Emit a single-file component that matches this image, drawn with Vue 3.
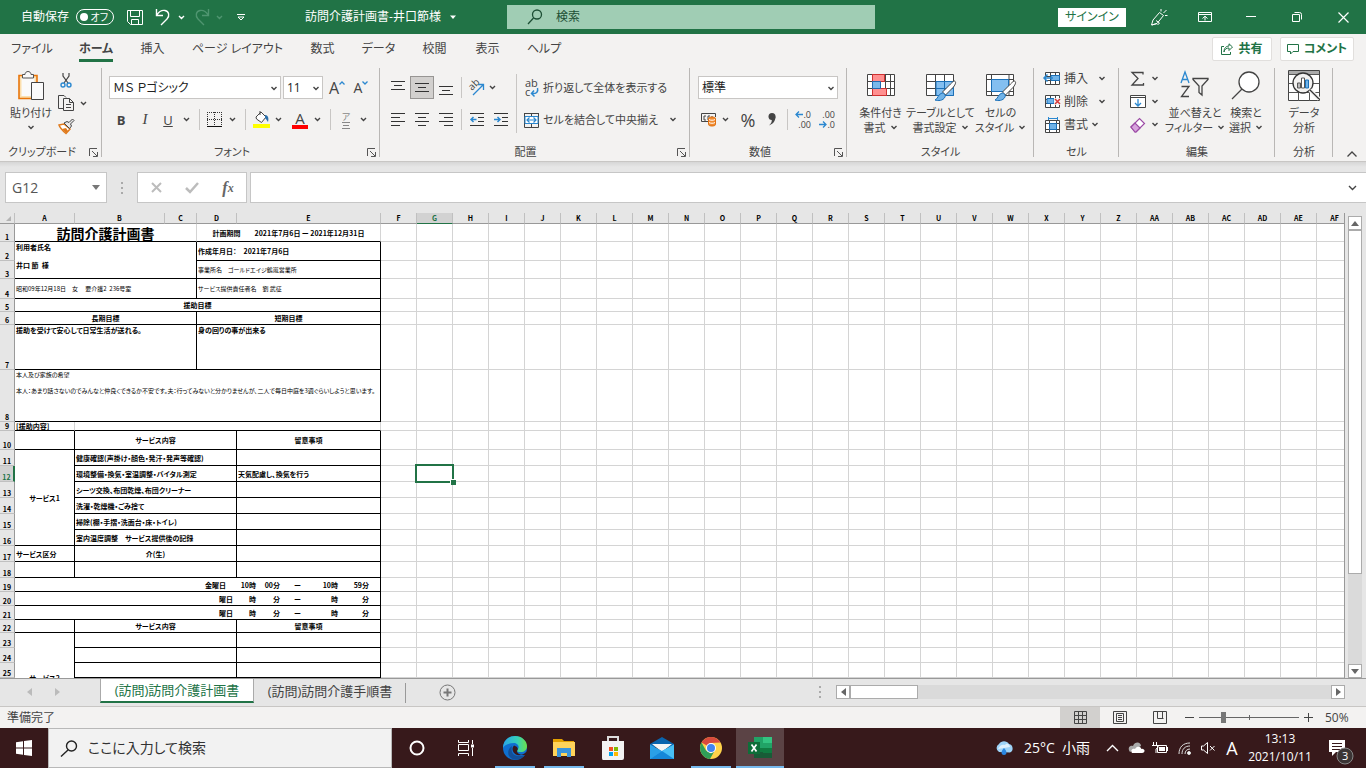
<script setup>
import { ref } from 'vue'

const tabs = ['ファイル', 'ホーム', '挿入', 'ページ レイアウト', '数式', 'データ', '校閲', '表示', 'ヘルプ']
const autosave = ref(false)
const zoom = ref(23)

const lead = [
  { n: 'A', w: 60 }, { n: 'B', w: 90 }, { n: 'C', w: 32 }, { n: 'D', w: 40 }, { n: 'E', w: 144 }
]
const rest = []
for (let i = 5; i < 32; i++) {
  rest.push({ n: i < 26 ? String.fromCharCode(65 + i) : 'A' + String.fromCharCode(39 + i), w: 36 })
}
const columns = [...lead, ...rest]

const service = (t, note = '') => [{ t, s: 3 }, { t: note }]
const time = (...parts) => [{ s: 5, parts, c: 'mid' }]
const rows = [
  { h: 18, cells: [{ t: '訪問介護計画書', s: 3, c: 'title open' }, { t: '計画期間　　2021年7月6日 ー 2021年12月31日', s: 2, c: 'center open' }] },
  { h: 19, cells: [{ t: '利用者氏名\n\n井口 節  様', s: 3, r: 2, c: 'top client' }, { t: '作成年月日：　2021年7月6日', s: 2 }] },
  { h: 18, cells: [{ t: '事業所名　ゴールドエイジ鶴嵐営業所', s: 2, c: 'thin' }] },
  { h: 20, cells: [{ t: '昭和09年12月18日　女　 要介護2  236号室', s: 3, c: 'thin' }, { t: 'サービス提供責任者名　劉 武征', s: 2, c: 'thin' }] },
  { h: 13, cells: [{ t: '援助目標', s: 5, c: 'center' }] },
  { h: 13, cells: [{ t: '長期目標', s: 3, c: 'center' }, { t: '短期目標', s: 2, c: 'center' }] },
  { h: 45, cells: [{ t: '援助を受けて安心して日常生活が送れる。', s: 3, c: 'top' }, { t: '身の回りの事が出来る', s: 2, c: 'top' }] },
  { h: 52, cells: [{ t: '本人及び家族の希望\n\n本人：あまり話さないのでみんなと仲良くできるか不安です。夫：行ってみないと分かりませんが、二人で毎日中庭を3週ぐらいしようと思います。', s: 5, c: 'top thin' }] },
  { h: 9, cells: [{ t: '[援助内容]', c: 'open' }, { s: 4, c: 'open' }] },
  { h: 19, cells: [{}, { t: 'サービス内容', s: 3, c: 'center' }, { t: '留意事項', c: 'center' }] },
  { h: 16, cells: [{ t: 'サービス1', r: 6, c: 'center' }, ...service('健康確認(声掛け・顔色・発汗・発声等確認)')] },
  { h: 16, cells: service('環境整備・換気・室温調整・バイタル測定', '天気配慮し、換気を行う') },
  { h: 16, cells: service('シーツ交換、布団乾燥、布団クリーナー') },
  { h: 16, cells: service('洗濯・乾燥機・ごみ捨て') },
  { h: 16, cells: service('掃除(棚・手摺・洗面台・床・トイレ)') },
  { h: 16, cells: service('室内温度調整　サービス提供後の記録') },
  { h: 16, cells: [{ t: 'サービス区分' }, { t: '介(生)', s: 3, c: 'center' }, {}] },
  { h: 16, cells: [{}, ...service('')] },
  { h: 14, cells: time('金曜日　', '10時', '00分', 'ー', '10時', '59分') },
  { h: 14, cells: time('曜日', '時', '分', 'ー', '時', '分') },
  { h: 14, cells: time('曜日', '時', '分', 'ー', '時', '分') },
  { h: 13, cells: [{}, { t: 'サービス内容', s: 3, c: 'center' }, { t: '留意事項', c: 'center' }] },
  { h: 15, cells: [{ t: 'サービス2', r: 4, c: 'center low' }, ...service('')] },
  { h: 15, cells: service('') },
  { h: 15, cells: service('') },
  { h: 15, cells: service('') }
]
</script>

<template>
  <div class="screen">
    <header class="titlebar">
      <div class="quick">
        <label class="auto">自動保存
          <span class="switch"><input v-model="autosave" type="checkbox"><i></i><b>オフ</b></span>
        </label>
        <button class="plain save" aria-label="保存">
          <svg width="16" height="17" fill="none" stroke="#fff"><path d="M.5 1.5h15v14h-12l-3-3zM3.500 1.500v6h9v-6M4.500 15.500v-5h7v5" /></svg>
        </button>
        <button class="plain undo" aria-label="元に戻す">
          <svg width="30" height="18" fill="none" stroke="#fff" stroke-width="1.400"><path d="M1.500 1v6.500H8M1.800 7C4 3.500 7 2 10 2.500c4 .8 5 5.500 2 8.500l-6 6M24 8l2.500 2.500L29 8" /></svg>
        </button>
        <button class="plain redo" aria-label="やり直し">
          <svg width="30" height="18" fill="none" stroke="#4f9570" stroke-width="1.400"><path d="M13.500 1v6.500H7M13.200 7C11 3.500 8 2 5 2.500 1 3.300 0 8 3 11l6 6M22 8l2.500 2.500L27 8" /></svg>
        </button>
        <button class="plain custom" aria-label="クイック アクセス">
          <svg width="8" height="8" fill="none" stroke="#fff"><path d="M0 1.500h8M1 4l3 3 3-3z" /></svg>
        </button>
        <button class="plain doc">訪問介護計画書-井口節様
          <svg width="6" height="4" fill="#fff"><path d="M0 .5h6L3 4z" /></svg>
        </button>
      </div>
      <label class="find">
        <svg width="16" height="16" fill="none" stroke="#1d4f35" stroke-width="1.300"><circle cx="10" cy="5.500" r="4.500" /><path d="M6.500 9 1 15" /></svg>
        <input type="text" placeholder="検索" aria-label="検索">
      </label>
      <div class="window">
        <button class="signin">サインイン</button>
        <button class="plain" aria-label="描画"><svg width="18" height="18" fill="none" stroke="#fff"><path d="M9.500 4.500 13.500 7.500 7 15.500 1.500 17 3 12zM2 17l5-1.500M6 12.500l3.500 2.500L7.500 17M11 3.500V1M13.500 5l3-3M15 7.500h2.500" /></svg></button>
        <button class="plain" aria-label="リボンの表示オプション"><svg width="14" height="12" fill="none" stroke="#fff"><path d="M.5 1.500h13v9H.5zM.5 3.500h13M7 9.500V5.500M4.500 7.500 7 5.200l2.500 2.300" /></svg></button>
        <button class="plain" aria-label="最小化"><svg width="10" height="10" stroke="#fff"><path d="M0 4.500h10" /></svg></button>
        <button class="plain" aria-label="元のサイズ"><svg width="11" height="11" fill="none" stroke="#fff"><path d="M.5 2.500h7v7h-7zM2.500.5h5a2 2 0 0 1 2 2v5" /></svg></button>
        <button class="plain" aria-label="閉じる"><svg width="11" height="11" stroke="#fff" stroke-width="1.200"><path d="m.5.5 10 10M10.500.5l-10 10" /></svg></button>
      </div>
    </header>

    <div class="tabrow">
      <nav>
        <button v-for="(t, i) in tabs" :key="t" class="plain" :class="{ on: i === 1 }">{{ t }}</button>
      </nav>
      <div class="share">
        <button><svg width="12" height="12" fill="none" stroke="#217346"><path d="M3 3.500H.5v8h9V9M3 9c.5-3 2.500-4 5-4V7.500l3.500-3.500L8 .8V3C5 3.200 3 5 3 9z" /></svg>共有</button>
        <button><svg width="12" height="11" fill="none" stroke="#217346"><path d="M.5.5h11v7H6l-2.500 2.500V7.500h-3z" /></svg>コメント</button>
      </div>
    </div>

    <section class="ribbon">
      <div class="group g-clip">
        <div class="body clip">
          <button class="plain big">
            <svg width="30" height="32" fill="none"><path d="M3 5.500h18v23H3z" fill="#fbdfae" stroke="#e8750a" stroke-width="1.600" /><path d="M5.500 8h13v18h-13z" fill="#fafafa" /><path d="M6.500 8V4.500H9C9 .5 15 .5 15 4.500h2.500V8z" fill="#fafafa" stroke="#555" /><path d="M15.500 12.500h12v17h-12z" fill="#fafafa" stroke="#444" /></svg>
            <span>貼り付け</span><svg class="chev" width="8" height="5"><path d="m1.500 1 2.500 2.500L6.500 1" /></svg>
          </button>
          <div class="minis">
            <button class="plain" aria-label="切り取り"><svg width="16" height="16" fill="none"><path d="M5 1v3l5 7M11 1v3L6 11" stroke="#444" stroke-width="1.200" /><g stroke="#2b88d0" stroke-width="1.400"><circle cx="5" cy="13" r="2" /><circle cx="11" cy="13" r="2" /></g></svg></button>
            <button class="plain" aria-label="コピー"><svg width="30" height="16" fill="none" stroke="#444"><path d="M6 13.500H.5v-13H6l2 2M5.500 3.500h6l4 4v8h-10zM11.500 3.500v4h4M8 9.500h5M8 12.500h5" /><path d="m23 7 2.500 2.500L28 7" stroke-width="1.400" /></svg></button>
            <button class="plain" aria-label="書式のコピー"><svg width="17" height="16" fill="none"><path d="m1 7 5-1 6 5-4 4.500C5 13 2 10 1 7z" fill="#fff" stroke="#e07a1c" stroke-width="1.500" /><path d="m4 11 4-1 2 3-2 2z" fill="#e07a1c" /><path d="m6 5 3-1.500 2 1L14.500 1 16 2.500 12.500 6l1 2-2 2.500z" fill="#e8e8e8" stroke="#444" /></svg></button>
          </div>
        </div>
        <div class="foot"><span>クリップボード</span><svg width="9" height="9"><path d="M.5 8V.5H8M3 3l5 5M8.500 4v4.500H4" /></svg></div>
      </div>

      <div class="group g-font">
        <div class="body stack">
          <div class="line">
            <span class="pick name"><select aria-label="フォント"><option>ＭＳ Ｐゴシック</option></select><svg class="chev" width="8" height="5"><path d="m1.500 1 2.500 2.500L6.500 1" /></svg></span>
            <span class="pick size"><select aria-label="フォント サイズ"><option>11</option></select><svg class="chev" width="8" height="5"><path d="m1.500 1 2.500 2.500L6.500 1" /></svg></span>
            <button class="plain cell grow">A<svg width="6" height="4" fill="none" stroke="#2b88d0" stroke-width="1.300"><path d="m.5 3.500 2.500-2.500 2.500 2.500" /></svg></button>
            <button class="plain cell grow small">A<svg width="6" height="4" fill="none" stroke="#2b88d0" stroke-width="1.300"><path d="m.5.5 2.500 2.500 2.500-2.500" /></svg></button>
          </div>
          <div class="line">
            <button class="plain cell bold">B</button><button class="plain cell ital">I</button><button class="plain cell under"><u>U</u></button>
            <svg class="chev arrow" width="15" height="5"><path d="m5 1 2.500 2.500L10 1" /></svg><hr>
            <button class="plain icon" aria-label="罫線"><svg width="16" height="17" stroke="#333"><path d="M0 1.500h15M0 8.500h15M.5 1v13M7.500 1v13M14.500 1v13" stroke-dasharray="1 1" /><path d="M0 15.500h15" stroke="#111" /></svg></button>
            <svg class="chev arrow" width="15" height="5"><path d="m5 1 2.500 2.500L10 1" /></svg><hr>
            <button class="plain icon" aria-label="塗りつぶし"><svg width="17" height="17" fill="none"><path d="m3 6 5-5 5 5-4.500 5.500-5-3.500zM7 0v4" fill="#fff" stroke="#444" /><path d="M12 4c3 0 4 3 3 7-1-1-1.500-3-3-4z" fill="#2b6faa" /><path d="M0 13h17v4H0z" fill="#ff0" /></svg></button>
            <svg class="chev arrow" width="15" height="5"><path d="m5 1 2.500 2.500L10 1" /></svg>
            <button class="plain icon color">A</button>
            <svg class="chev arrow" width="15" height="5"><path d="m5 1 2.500 2.500L10 1" /></svg><hr>
            <button class="plain icon ruby">ア<svg width="8" height="7" stroke="#888"><path d="M0 .5h8M1 3.500h6M0 6.500h8" /></svg></button>
            <svg class="chev arrow" width="15" height="5"><path d="m5 1 2.500 2.500L10 1" /></svg>
          </div>
        </div>
        <div class="foot"><span>フォント</span><svg width="9" height="9"><path d="M.5 8V.5H8M3 3l5 5M8.500 4v4.500H4" /></svg></div>
      </div>

      <div class="group g-align">
        <div class="body aligns">
          <div class="stack">
            <div class="line">
              <button class="plain cell" aria-label="上揃え"><svg width="14" height="16"><path class="ink" d="M0 1.500h14M3 5.500h8M0 9.500h14" /></svg></button>
              <button class="plain cell pressed" aria-label="上下中央"><svg width="14" height="16"><path class="ink" d="M0 3.500h14M3 7.500h8M0 11.500h14" /></svg></button>
              <button class="plain cell" aria-label="下揃え"><svg width="14" height="16"><path class="ink" d="M0 6.500h14M3 10.500h8M0 14.500h14" /></svg></button><hr>
              <button class="plain icon" aria-label="方向"><svg width="18" height="18" fill="none"><text font-size="10" fill="#444" transform="translate(6 12) rotate(-45)">ab</text><path d="m7 16 10-10M12 5.500h5.500V11" stroke="#2b88d0" stroke-width="1.300" /></svg></button>
              <svg class="chev arrow" width="15" height="5"><path d="m5 1 2.500 2.500L10 1" /></svg>
            </div>
            <div class="line">
              <button class="plain cell" aria-label="左揃え"><svg width="14" height="14"><path class="ink" d="M0 .5h14M0 4.500h9M0 8.500h14M0 12.500h9" /></svg></button>
              <button class="plain cell" aria-label="中央揃え"><svg width="14" height="14"><path class="ink" d="M0 .5h14M3 4.500h8M0 8.500h14M3 12.500h8" /></svg></button>
              <button class="plain cell" aria-label="右揃え"><svg width="14" height="14"><path class="ink" d="M0 .5h14M5 4.500h9M0 8.500h14M5 12.500h9" /></svg></button><hr>
              <button class="plain cell" aria-label="インデントを減らす"><svg width="14" height="14" fill="none"><path class="ink" d="M0 .5h14M8 4.500h6M8 8.500h6M0 12.500h14" /><path d="M6.500 6.500H1M3.500 4 1 6.500 3.500 9" stroke="#2b88d0" stroke-width="1.500" /></svg></button>
              <button class="plain cell" aria-label="インデントを増やす"><svg width="14" height="14" fill="none"><path class="ink" d="M0 .5h14M8 4.500h6M8 8.500h6M0 12.500h14" /><path d="M0 6.500h6M3.500 4 6 6.500 3.500 9" stroke="#2b88d0" stroke-width="1.500" /></svg></button>
            </div>
          </div>
          <hr class="tall">
          <div class="stack wraps">
            <button class="plain line"><svg width="16" height="20" fill="none"><text x="1" y="9" font-size="11" fill="#444">ab</text><text x="1" y="18" font-size="11" fill="#444">c</text><path d="M13.500 10c1 4-1 6-6 5.500M10 12.500 7.500 15.500l3 3" stroke="#2b88d0" stroke-width="1.500" /></svg>折り返して全体を表示する</button>
            <button class="plain line"><svg width="16" height="16" fill="none"><path d="M.5 1v14.500h14V1M0 1.500h15M7.500 1v3M7.500 12v3" stroke="#444" /><path d="M1 4.500h13v7H1z" fill="#fff" stroke="#2b88d0" /><path d="M3 8h9M5.500 5.500 3 8l2.500 2.500M9.500 5.500 12 8l-2.500 2.500" stroke="#2b88d0" stroke-width="1.200" /></svg>セルを結合して中央揃え<svg class="chev push" width="8" height="5"><path d="m1.500 1 2.500 2.500L6.500 1" /></svg></button>
          </div>
        </div>
        <div class="foot"><span>配置</span><svg width="9" height="9"><path d="M.5 8V.5H8M3 3l5 5M8.500 4v4.500H4" /></svg></div>
      </div>

      <div class="group g-num">
        <div class="body stack">
          <div class="line"><span class="pick format"><select aria-label="表示形式"><option>標準</option></select><svg class="chev" width="8" height="5"><path d="m1.500 1 2.500 2.500L6.500 1" /></svg></span></div>
          <div class="line">
            <button class="plain icon" aria-label="通貨"><svg width="17" height="15" fill="none"><path d="M8 9.500H1.500v-8h14V5M6 4H4v4h2M8 8V4h2M12 4v2" stroke="#444" /><path d="M8.500 6.500v6c0 2 7 2 7 0v-6c0-2-7-2-7 0z" fill="#f08a2e" stroke="#e07010" /><path d="M9 7.500c1 1 5 1 6 0M9 10.500c1 1 5 1 6 0" stroke="#fff" /></svg></button>
            <svg class="chev arrow" width="15" height="5"><path d="m5 1 2.500 2.500L10 1" /></svg>
            <button class="plain cell pct">%</button>
            <button class="plain cell" aria-label="桁区切り"><svg width="8" height="13"><circle cx="4" cy="3.500" r="3.500" fill="#444" /><path d="M7.500 3.500C7.500 8 5 11 1 12.500c2-2 3.500-4 2.500-6.500z" fill="#444" /></svg></button><hr>
            <button class="plain cell dec"><span><svg width="8" height="7" fill="none" stroke="#2b88d0" stroke-width="1.300"><path d="M8 3.500H1M4 .5 1 3.500l3 3" /></svg>.0</span><span>.00</span></button>
            <button class="plain cell dec"><span>.00</span><span><svg width="8" height="7" fill="none" stroke="#2b88d0" stroke-width="1.300"><path d="M0 3.500h7M4 .5l3 3-3 3" /></svg>.0</span></button>
          </div>
        </div>
        <div class="foot"><span>数値</span><svg width="9" height="9"><path d="M.5 8V.5H8M3 3l5 5M8.500 4v4.500H4" /></svg></div>
      </div>

      <div class="group g-style">
        <div class="body trio">
          <button class="plain big"><svg width="30" height="32" fill="none"><path d="M1.500 4.500h27v21h-27zM1.500 11.500h27M1.500 18.500h27M6.500 4v21M19.500 4v21M24.500 4v21" fill="#fff" stroke="#444" /><path d="M6.500 4.500h12v7h-12zM6.500 18.500h14v7h-14z" fill="#ff9090" stroke="#d03030" /><path d="M6.500 11.500h8v7h-8z" fill="#7ab8ea" stroke="#2068b0" /></svg><span>条件付き</span><span>書式<svg class="chev" width="8" height="5"><path d="m1.500 1 2.500 2.500L6.500 1" /></svg></span></button>
          <button class="plain big"><svg width="32" height="32" fill="none"><path d="M1.500 4.500h27v21h-27z" fill="#fff" stroke="#444" /><path d="M11 11.500h17.500v14H11z" fill="#84bff0" /><path d="M1.500 11.500h27M1.500 18.500h27M10.500 4v21M19.500 4v21" stroke="#444" /><path d="M11 11.500h17.500v14H11zM11 18.500h17M19.500 12v13" stroke="#1b70b8" /><path d="M29.500 11c2 1 1 3-1 6l-8 8-3-3 8-8c2-2 3-3 4-3z" fill="#fff" stroke="#444" /><path d="M17 23c2 0 4 2 3 4-2 4-7 4-10 3 3-1 3-6 7-7z" fill="#70b3e8" stroke="#1b70b8" /></svg><span>テーブルとして</span><span>書式設定<svg class="chev" width="8" height="5"><path d="m1.500 1 2.500 2.500L6.500 1" /></svg></span></button>
          <button class="plain big"><svg width="32" height="32" fill="none"><path d="M1.500 4.500h27v21h-27zM1.500 9.500h27M1.500 21.500h27M6.500 4v21M24 4v21" fill="#fff" stroke="#444" /><path d="M6.500 9.500h17v12h-17z" fill="#84bff0" stroke="#1b70b8" /><path d="M29.500 11c2 1 1 3-1 6l-8 8-3-3 8-8c2-2 3-3 4-3z" fill="#fff" stroke="#444" /><path d="M17 23c2 0 4 2 3 4-2 4-7 4-10 3 3-1 3-6 7-7z" fill="#70b3e8" stroke="#1b70b8" /></svg><span>セルの</span><span>スタイル<svg class="chev" width="8" height="5"><path d="m1.500 1 2.500 2.500L6.500 1" /></svg></span></button>
        </div>
        <div class="foot solo"><span>スタイル</span></div>
      </div>

      <div class="group g-cell">
        <div class="body list">
          <button class="plain"><svg width="17" height="16" fill="none"><path d="M1.500 1.500h14v12h-14zM1.500 5.500h14M1.500 9.500h14M6.500 1v13M11.500 1v13" fill="#fff" stroke="#444" /><path d="M7 4.500h8.500v5H7z" fill="#70b3e8" stroke="#1b70b8" /><path d="M9 7H0M3.500 3.500 0 7l3.500 3.500" stroke="#2b88d0" stroke-width="1.500" /></svg>挿入<svg class="chev push" width="8" height="5"><path d="m1.500 1 2.500 2.500L6.500 1" /></svg></button>
          <button class="plain"><svg width="17" height="16" fill="none"><path d="M1.500 1.500h14v12h-14zM1.500 5.500h14M1.500 9.500h14M6.500 1v13M11.500 1v13" fill="#fff" stroke="#444" /><path d="M3 4.500h7v5H3z" fill="#70b3e8" stroke="#1b70b8" /><path d="M10 4h7v7h-7z" fill="#f3f2f1" /><path d="m11 5 5 5M16 5l-5 5" stroke="#d83b3b" stroke-width="1.500" /></svg>削除<svg class="chev push" width="8" height="5"><path d="m1.500 1 2.500 2.500L6.500 1" /></svg></button>
          <button class="plain"><svg width="17" height="16" fill="none"><path d="M1.500 3.500h14v12h-14zM1.500 6.500h14M1.500 12.500h14M5.500 3v12M12.500 3v12" fill="#fff" stroke="#444" /><path d="M5.500 6.500h7v6h-7z" fill="#70b3e8" stroke="#1b70b8" /><path d="M4 1.500h10M4.500 0v3M13.500 0v3" stroke="#2b88d0" /></svg>書式<svg class="chev" width="8" height="5"><path d="m1.500 1 2.500 2.500L6.500 1" /></svg></button>
        </div>
        <div class="foot solo"><span>セル</span></div>
      </div>

      <div class="group g-edit">
        <div class="body edit">
          <div class="list">
            <button class="plain" aria-label="合計"><svg width="16" height="16" fill="none" stroke="#444" stroke-width="1.300"><path d="M13 3.500V1.500H2l6 6-6 6.500h11.500V12" /></svg><svg class="chev" width="8" height="5"><path d="m1.500 1 2.500 2.500L6.500 1" /></svg></button>
            <button class="plain" aria-label="フィル"><svg width="16" height="16" fill="none"><path d="M.5 1.500h15v12H.5zM.5 3.500h15" fill="#fff" stroke="#444" /><path d="M8 5v7M5 9l3 3 3-3" stroke="#2b88d0" stroke-width="1.300" /></svg><svg class="chev" width="8" height="5"><path d="m1.500 1 2.500 2.500L6.500 1" /></svg></button>
            <button class="plain" aria-label="クリア"><svg width="16" height="16" fill="none" stroke="#9b4aa5" stroke-width="1.200"><path d="m1 10 8.500-8.500 5 5L6 15H5z" fill="#fff" /><path d="m1 10 4-4 5 5-4 4H5z" fill="#d7a3dd" /></svg><svg class="chev" width="8" height="5"><path d="m1.500 1 2.500 2.500L6.500 1" /></svg></button>
          </div>
          <button class="plain big sort"><svg width="30" height="32" fill="none" stroke-width="1.300"><path d="m1 13 4-11 4 11M2.500 9.500h5" stroke="#2b88d0" /><path d="M1.500 16.500H9l-7.500 10H9M13 8.500h15v1l-6 6.500v9l-3-2.500V16l-6-6.500z" stroke="#444" /></svg><span>並べ替えと</span><span>フィルター<svg class="chev" width="8" height="5"><path d="m1.500 1 2.500 2.500L6.500 1" /></svg></span></button>
          <button class="plain big look"><svg width="30" height="32" fill="none" stroke="#444" stroke-width="1.300"><circle cx="18" cy="12" r="10" fill="#fff" /><path d="M11 19 1 29" /></svg><span>検索と</span><span>選択<svg class="chev" width="8" height="5"><path d="m1.500 1 2.500 2.500L6.500 1" /></svg></span></button>
        </div>
        <div class="foot solo"><span>編集</span></div>
      </div>

      <div class="group g-data">
        <div class="body trio">
          <button class="plain big"><svg width="32" height="32" fill="none"><path d="M.5.5h31v30H.5z" fill="#fff" stroke="#444" /><path d="M1 1h30v3H1z" fill="#aaa" /><path d="M.5 4.500h31M.5 13.500h31M.5 22.500h31M10.500 5v26M21.500 5v26" stroke="#555" /><circle cx="15" cy="13" r="10" fill="#f3f2f1" stroke="#333" stroke-width="1.300" /><path d="m22 20 9 9" stroke="#f3f2f1" stroke-width="4" /><path d="m22 20 9 9" stroke="#333" stroke-width="1.300" /><path d="M9.500 13h3v5h-3z" fill="#bbb" stroke="#555" /><path d="M13.500 8h3v10h-3z" fill="#fff" stroke="#555" /><path d="M17.500 10h3v8h-3z" fill="#70b3e8" stroke="#1b70b8" /></svg><span>データ</span><span>分析</span></button>
        </div>
        <div class="foot solo"><span>分析</span></div>
      </div>
      <button class="plain collapse" aria-label="リボンを折りたたむ"><svg width="10" height="6" fill="none" stroke="#444" stroke-width="1.300"><path d="m.5 5.500 4.500-4.500 4.500 4.500" /></svg></button>
    </section>

    <section class="formula">
      <div class="namebox"><input type="text" value="G12" aria-label="名前ボックス"><svg width="8" height="5" fill="#777"><path d="M0 0h8L4 5z" /></svg></div>
      <svg width="2" height="12" fill="#aaa"><path d="M0 0h2v2H0zM0 5h2v2H0zM0 10h2v2H0z" /></svg>
      <div class="fx">
        <button class="plain" aria-label="キャンセル"><svg width="11" height="11" stroke="#bcbcbc" stroke-width="2"><path d="m1 1 9 9M10 1l-9 9" /></svg></button>
        <button class="plain" aria-label="入力"><svg width="14" height="12" fill="none" stroke="#bcbcbc" stroke-width="2.500"><path d="m1 6 4 4 8-9" /></svg></button>
        <button class="plain fn">f<small>x</small></button>
      </div>
      <div class="entry"><input type="text" aria-label="数式バー"><svg class="chev" width="9" height="6"><path d="m1 1 3.500 3.500L8 1" /></svg></div>
    </section>

    <main class="sheet">
      <div class="grid">
        <table>
          <colgroup><col class="rowcol"><col v-for="c in columns" :key="c.n" :style="{ width: c.w + 'px' }"></colgroup>
          <thead><tr><th class="corner"><svg width="5" height="5" fill="#b4b4b4"><path d="M5 0v5H0z" /></svg></th><th v-for="c in columns" :key="c.n" :class="{ sel: c.n === 'G' }">{{ c.n }}</th></tr></thead>
          <tbody>
            <tr v-for="(row, r) in rows" :key="r" :style="{ height: row.h + 'px' }">
              <th :class="{ sel: r === 11 }">{{ r + 1 }}</th>
              <td v-for="(cell, i) in row.cells" :key="i" class="form" :class="cell.c" :colspan="cell.s || 1" :rowspan="cell.r || 1"><div v-if="cell.parts" class="times"><span v-for="(p, k) in cell.parts" :key="k">{{ p }}</span></div><template v-else>{{ cell.t }}</template></td>
              <td v-for="c in rest" :key="c.n" :class="{ active: r === 11 && c.n === 'G' }"></td>
            </tr>
          </tbody>
        </table>
      </div>
      <div class="vscroll">
        <button aria-label="上へ"><svg width="8" height="5"><path d="M0 5h8L4 0z" /></svg></button>
        <div class="thumb"></div>
        <button aria-label="下へ"><svg width="8" height="5"><path d="M0 0h8L4 5z" /></svg></button>
      </div>
    </main>

    <section class="sheetbar">
      <button class="plain nav" aria-label="前のシート"><svg width="5" height="8" fill="#bbb"><path d="M5 0v8L0 4z" /></svg></button>
      <button class="plain nav" aria-label="次のシート"><svg width="5" height="8" fill="#bbb"><path d="M0 0v8l5-4z" /></svg></button>
      <button class="tab current">(訪問)訪問介護計画書</button>
      <button class="tab other">(訪問)訪問介護手順書</button>
      <button class="plain add" aria-label="新しいシート"><svg width="17" height="17" fill="none" stroke="#777"><circle cx="8.500" cy="8.500" r="7.500" /><path d="M8.500 4.500v8M4.500 8.500h8" stroke-width="2" /></svg></button>
      <div class="hpart">
        <svg width="2" height="12" fill="#aaa"><path d="M0 0h2v2H0zM0 5h2v2H0zM0 10h2v2H0z" /></svg>
        <div class="hscroll">
          <button aria-label="左へ"><svg width="5" height="8"><path d="M5 0v8L0 4z" /></svg></button>
          <div class="thumb"></div>
          <button aria-label="右へ"><svg width="5" height="8"><path d="M0 0v8l5-4z" /></svg></button>
        </div>
      </div>
    </section>

    <footer class="status">
      <span class="ready">準備完了</span>
      <button class="plain view on" aria-label="標準"><svg width="13" height="13" fill="none" stroke="#444"><path d="M.5.5h12v12H.5zM.5 4.500h12M.5 8.500h12M4.500.5v12M8.500.5v12" /></svg></button>
      <button class="plain view" aria-label="ページ レイアウト"><svg width="14" height="13" fill="none" stroke="#444"><path d="M.5.5h13v12H.5zM3.500 2.500h7v8h-7zM5 4.500h4M5 6.500h4M5 8.500h4" /></svg></button>
      <button class="plain view" aria-label="改ページ"><svg width="14" height="13" fill="none" stroke="#444"><path d="M.5.5h13v12H.5zM4.500.5v7h6M9.500.5v7" /></svg></button>
      <button class="plain step" aria-label="縮小"><svg width="9" height="9" stroke="#444"><path d="M0 4.500h9" /></svg></button>
      <input v-model="zoom" class="zoom" type="range" min="0" max="100" aria-label="ズーム">
      <button class="plain step" aria-label="拡大"><svg width="9" height="9" stroke="#444"><path d="M0 4.500h9M4.500 0v9" /></svg></button>
      <span class="percent">50%</span>
    </footer>

    <footer class="taskbar">
      <button class="plain app" aria-label="スタート"><svg width="16" height="16" fill="#fff"><path d="M0 2.300 7 1.300v6.200H0zM8 1.100 16 0v7.500H8zM0 8.500h7v6.200L0 13.700zM8 8.500h8V16l-8-1.100z" /></svg></button>
      <label class="cortana">
        <svg width="18" height="17" fill="none" stroke="#222" stroke-width="1.400"><circle cx="11.500" cy="6" r="5" /><path d="M8 10 1 16.500" /></svg>
        <input type="text" placeholder="ここに入力して検索" aria-label="ここに入力して検索">
      </label>
      <div class="apps">
        <button class="plain app" aria-label="Cortana"><svg width="16" height="16" fill="none" stroke="#fff" stroke-width="2"><circle cx="8" cy="8" r="6.500" /></svg></button>
        <button class="plain app" aria-label="タスク ビュー"><svg width="17" height="16" fill="none" stroke="#fff"><path d="M.5 0v2.500h10V0M.5 4.500h10v6H.5zM.5 16v-2.500h10V16M14.500 0v4M14.500 8v8" /><path d="M13 4.500h3v3h-3z" fill="#fff" stroke="none" /></svg></button>
        <button class="plain app run" aria-label="Edge"><svg width="24" height="24"><defs><linearGradient id="eg" x1="0" x2="1"><stop offset="0" stop-color="#2aa5e8" /><stop offset=".6" stop-color="#36d0b8" /><stop offset="1" stop-color="#6be04a" /></linearGradient></defs><circle cx="12" cy="12" r="12" fill="#0f6fd0" /><path d="M0 12C0 5 5 0 12 0s12 5 12 10c0 4-3 6-6 6-4 0-5-1-3-3 2-3-1-6-4-6C6 7 1 9 0 12z" fill="url(#eg)" /><path d="M9 10c-2 8 3 12 13 9-4 6-13 6-16 1-2-4 0-8 3-10z" fill="#134f98" /><path d="M11 9.500c-3 3-1 8 3 9.500 4 1 7-1 8.500-2.500l2.500-1v2l-3 1.500c-3 .5-8-1-8-4 1-1 2-4-3-5.500z" fill="#37191b" /></svg></button>
        <button class="plain app run" aria-label="エクスプローラー"><svg width="22" height="20"><path d="M0 1h9l2 2h10v4H0z" fill="#e4a000" /><path d="M0 4h22v14H0z" fill="#ffd35a" /><path d="M4 19v-9h14v9h-4v-4H8v4z" fill="#3b94db" /></svg></button>
        <button class="plain app" aria-label="Store"><svg width="24" height="24"><path d="M7 7V1h10v6" fill="none" stroke="#ddd" stroke-width="2" /><path d="M1 5h22v17q0 2-2 2H2q-1 0-1-2z" fill="#f3f3f3" /><path d="M8 11h4v4H8z" fill="#f25022" /><path d="M13 11h4v4h-4z" fill="#7fba00" /><path d="M8 16h4v4H8z" fill="#00a4ef" /><path d="M13 16h4v4h-4z" fill="#ffb900" /></svg></button>
        <button class="plain app" aria-label="メール"><svg width="24" height="22"><path d="M0 7 12 0l12 7v3H0z" fill="#0a64ad" /><path d="M2 7h20l-10 8z" fill="#f5f5f5" /><path d="M0 7.500 12 14l12-6.500V22H0z" fill="#2aa0e6" /><path d="M0 22 12 14l12-6.500V22z" fill="#48bff5" /><path d="M0 22 12 14l12 8z" fill="#1587d8" /></svg></button>
        <button class="plain app run" aria-label="Chrome"><svg width="22" height="22"><circle cx="11" cy="11" r="11" fill="#ffd34a" /><path d="M11 11 1.500 5.500A11 11 0 0 1 20.500 5.500L11 6z" fill="#d94a3d" /><path d="M1.500 5.500A11 11 0 0 0 10 22l5-9-4 3.500-5-3z" fill="#2f9e58" /><circle cx="11" cy="11" r="5" fill="#fff" /><circle cx="11" cy="11" r="4" fill="#4284f0" /></svg></button>
        <button class="plain app run lit" aria-label="Excel"><svg width="24" height="22"><path d="M6 0h18v21H6z" fill="#21a366" /><path d="M15 0h9v6h-9z" fill="#33c481" /><path d="M6 11h18v10H6z" fill="#107c41" /><path d="M6 15h18v6H6z" fill="#185c37" /><path d="M15 11h9v5h-9z" fill="#107c41" /><path d="M0 5h12v12H0z" fill="#0e6e39" /><path d="m3.500 7.500 5 7M8.500 7.500l-5 7" stroke="#fff" stroke-width="1.700" /></svg></button>
      </div>
      <div class="tray">
        <button class="plain weather"><svg width="21" height="16"><path d="M5 12a4.500 4.500 0 0 1 0-8 6 6 0 0 1 10 0 4.500 4.500 0 0 1 1 8.500z" fill="#9ed3f7" /><path d="M4 9c2-4 4-5 7-4 2-3 5 0 5 2" fill="#dff0fc" /><path d="M10 8c3 3 3.500 7 0 7s-3-4 0-7z" fill="#2a86e0" /></svg>25°C&nbsp; 小雨</button>
        <button class="plain t" aria-label="隠れているインジケーター"><svg width="13" height="8" fill="none" stroke="#fff" stroke-width="1.400"><path d="m1 7 5.500-5.500L12 7" /></svg></button>
        <button class="plain t" aria-label="OneDrive"><svg width="17" height="12"><path d="M2 10C-1 6 2 3 5 4c2-5 8-4 8 0z" fill="#aaa" /><path d="M4 11c-2-3 1-5 3-4 2-4 7-2 6 0 4-1 5 4 1 4z" fill="#fff" /></svg></button>
        <button class="plain t" aria-label="バッテリー"><svg width="17" height="12" fill="none" stroke="#fff"><path d="M5.500 3.500h9v7h-9zM15.500 5v4M1.500 0v3M4.500 0v3M0 3.500h6v2L4 7v4" /><path d="M7 5h6v4H7z" fill="#fff" stroke="none" /></svg></button>
        <button class="plain t" aria-label="ネットワーク"><svg width="13" height="13" fill="none" stroke="#ddd"><path d="M1 12C1 5 5 1 12 1M4 12c0-5 3-8 8-8M7 12c0-3 2-5 5-5" /><circle cx="11" cy="11" r="1.500" fill="#fff" /></svg></button>
        <button class="plain t" aria-label="音量"><svg width="15" height="12" fill="none" stroke="#fff"><path d="M.5 4v4h2l4 3.500V.5L2.500 4zM9 4l4.500 4.500M13.500 4 9 8.500" /></svg></button>
        <button class="plain t ime">A</button>
        <button class="plain clock"><span>13:13</span><span>2021/10/11</span></button>
        <button class="plain note" aria-label="通知"><svg width="25" height="25"><path d="M0 0h16v12h-9l-4 4v-4H0z" fill="#fff" /><path d="M3 3.500h10M3 6.500h10M3 9.500h8" stroke="#37191b" /><circle cx="16" cy="16" r="8" fill="#3b3535" stroke="#888" /><text x="13" y="20" fill="#fff" font-size="11">3</text></svg></button>
      </div>
    </footer>
  </div>
</template>

<style>
body { margin: 0; overflow: hidden; }
</style>

<style scoped>
.screen { display: flex; flex-direction: column; height: 100vh; background: #e6e6e6; color: #444; font: 12px/16px "Open Sans", "Noto Sans CJK JP", sans-serif; font-feature-settings: "palt"; white-space: nowrap; }
.screen *, .screen *::before, .screen *::after { box-sizing: border-box; }
button, input, select { font: inherit; color: inherit; font-feature-settings: inherit; padding: 0; margin: 0; border: 0; border-radius: 0; outline: 0; min-width: 0; }
svg { flex: none; overflow: visible; }
svg text { font-family: "Open Sans", sans-serif; }
.plain { background: none; display: flex; align-items: center; justify-content: center; }
.chev { fill: none; stroke: #444; stroke-width: 1.4; }
.ink { stroke: #333; }

.titlebar { display: grid; grid-template-columns: 507fr 368fr 491fr; align-items: center; height: 34px; background: #217346; color: #fff; flex: none; }
.quick { display: flex; align-items: center; padding-left: 21px; }
.auto { display: flex; align-items: center; gap: 7px; }
.switch { position: relative; display: flex; align-items: center; width: 38px; height: 16px; border: 1px solid #fff; border-radius: 8px; padding: 0 5px 0 3px; justify-content: space-between; }
.switch input { position: absolute; inset: 0; opacity: 0; }
.switch i { width: 8px; height: 8px; border-radius: 50%; background: #fff; }
.switch b { font-weight: 400; font-size: 10px; }
.save { margin-left: 13px; }
.undo { margin-left: 12px; }
.redo { margin-left: 10px; }
.custom { margin-left: 12px; }
.doc { margin-left: 60px; gap: 9px; }
.find { display: flex; align-items: center; gap: 13px; height: 24px; padding-left: 20px; background: #a0cdb4; color: #1d4f35; }
.find input { flex: 1; background: none; }
.find input::placeholder { color: #1d4f35; opacity: 1; }
.window { display: flex; justify-content: flex-end; }
.window .plain { width: 46px; height: 34px; }
.signin { align-self: center; width: 68px; height: 19px; margin-right: 10px; background: #fff; color: #217346; }

.tabrow { display: flex; justify-content: space-between; height: 32px; background: #f3f2f1; flex: none; }
nav { display: grid; grid-template-columns: 64px 64px 49px 121px 49px 63px 49px 57px 56px; justify-items: center; }
nav .plain { height: 28px; border-bottom: 3px solid transparent; padding-top: 4px; }
nav .on { font-weight: 700; border-color: #217346; }
.share { display: flex; gap: 8px; padding: 3px 12px 0 0; }
.share button { display: flex; align-items: center; justify-content: center; gap: 5px; height: 24px; width: 60px; background: #fff; border: 1px solid #e1dfdd; border-radius: 2px; color: #217346; font-weight: 700; }
.share button + button { width: 74px; }

.ribbon { display: flex; height: 96px; background: #f3f2f1; border-bottom: 1px solid #c8c6c4; flex: none; }
.group { position: relative; display: flex; flex-direction: column; flex: none; }
.group::after { content: ""; position: absolute; right: 0; top: 2px; bottom: 4px; width: 1px; background: #b9b7b5; }
.g-clip { width: 102px; }
.g-font { width: 278px; padding-left: 7px; }
.g-align { width: 310px; padding-left: 6px; }
.g-num { width: 157px; padding-left: 8px; }
.g-style { width: 187px; }
.g-cell { width: 85px; }
.g-edit { width: 156px; }
.g-data { width: 58px; }
.body { height: 77px; flex: none; }
.foot { display: grid; grid-template-columns: 1fr 18px; align-items: center; justify-items: center; height: 20px; font-size: 11px; }
.g-font .foot, .g-align .foot, .g-num .foot { margin-left: -7px; }
.foot.solo { grid-template-columns: 1fr; }
.foot svg { fill: none; stroke: #555; }
.clip { display: flex; padding-left: 8px; gap: 4px; }
.big { flex-direction: column; justify-content: flex-start; padding-top: 4px; line-height: 15px; font-size: 11px; }
.big > svg:first-child { margin-bottom: 3px; }
.big span { display: flex; align-items: center; gap: 4px; }
.clip .big { width: 46px; }
.clip .big .chev { margin-top: 5px; }
.minis { display: flex; flex-direction: column; align-items: flex-start; gap: 7px; padding-top: 6px; }
.stack { display: flex; flex-direction: column; }
.body.stack, .aligns .stack { padding-top: 10px; gap: 9px; }
.line { display: flex; align-items: center; height: 23px; }
.pick { position: relative; display: flex; height: 23px; background: #fff; border: 1px solid #c8c6c4; color: #222; }
.pick select { appearance: none; width: 100%; background: none; padding: 0 16px 0 3px; }
.pick .chev { position: absolute; right: 2px; top: 9px; pointer-events: none; }
.name { width: 172px; margin-right: 2px; }
.size { width: 40px; margin-right: 2px; }
.format { width: 140px; }
.cell { width: 24px; height: 23px; flex: none; }
.icon { width: 20px; height: 23px; flex: none; }
.grow { font-size: 16px; align-items: center; }
.grow svg { margin-bottom: 10px; }
.grow.small { font-size: 14px; }
.bold { font-weight: 700; font-size: 13px; }
.ital { font: italic 15px "Liberation Serif", serif; }
.under { width: 22px; font-size: 13px; }
.arrow { flex: none; }
hr { width: 1px; height: 21px; margin: 0 5px; border: 0; background: #c8c6c4; flex: none; }
.color { font-size: 15px; line-height: 14px; height: 18px; border-bottom: 4px solid #f00; width: 16px; margin: 0 2px; }
.g-font .arrow + .color { margin-left: 6px; }
.ruby { flex-direction: column; font-size: 9px; line-height: 11px; color: #888; }
.aligns { display: flex; }
.aligns hr { margin: 0 3px; }
.aligns .stack:first-child { width: 130px; }
.aligns .tall { height: 59px; margin: 8px 7px 0 0; }
.pressed { background: #d2d0ce; border: 1px solid #979593; }
.wraps .line { gap: 3px; width: 153px; justify-content: flex-start; font-size: 11px; }
.push { margin-left: auto; }
.pct { font-size: 18px; margin-left: 3px; }
.g-num hr { margin: 0 3px; }
.dec { flex-direction: column; align-items: flex-end; font-size: 9px; line-height: 10px; padding-right: 4px; }
.dec span { display: flex; align-items: center; }
.trio { display: flex; justify-content: center; }
.g-style .big { width: 60px; }
.list { display: flex; flex-direction: column; padding-top: 1px; }
.list .plain { height: 23px; justify-content: flex-start; gap: 3px; }
.g-cell .list { padding-left: 10px; padding-right: 13px; }
.edit { display: flex; }
.edit > .list { width: 48px; padding-left: 11px; }
.edit .list .plain { gap: 5px; }
.sort { width: 56px; }
.look { width: 46px; }
.collapse { margin-left: auto; align-self: flex-end; width: 29px; height: 14px; }

.formula { display: flex; align-items: center; height: 51px; background: linear-gradient(#d6d6d6, #e6e6e6 5px); flex: none; padding-left: 5px; }
.formula > div { display: flex; align-items: center; height: 31px; background: #fff; border: 1px solid #c6c6c6; }
.namebox { width: 102px; padding: 0 6px; margin-right: 14px; }
.namebox input { width: 82px; font-size: 14px; color: #555; background: none; }
.fx { width: 110px; margin: 0 3px 0 14px; }
.fx .plain { width: 36px; }
.fn { font: italic 700 16px/16px "Liberation Serif", serif; color: #666; }
.fn small { font-size: 12px; }
.formula .entry { flex: 1; border-right: 0; padding-right: 9px; }
.entry input { flex: 1; background: none; }

.sheet { display: flex; flex: 1; min-height: 0; border-bottom: 1px solid #999; }
.grid { flex: 1; min-width: 0; overflow: hidden; border-right: 1px solid #999; background: #fff; }
table { table-layout: fixed; width: 1px; border-collapse: separate; border-spacing: 0; font: 700 7px/8px "Noto Sans CJK JP", sans-serif; font-feature-settings: "palt"; color: #000; }
.rowcol { width: 15px; }
th { padding: 0; background: #e6e6e6; border-right: 1px solid #c0c0c0; border-bottom: 1px solid #999; line-height: 8px; overflow: hidden; }
thead th { height: 11px; }
.corner svg { display: block; margin-left: 6px; }
tbody th { vertical-align: bottom; border-right-color: #999; border-bottom-color: #c0c0c0; padding: 0; }
th.sel { background: #d2d2d2; color: #217346; }
thead .sel { border-bottom-color: #217346; }
tbody .sel { border-right: 2px solid #217346; }
td { padding: 0 1px; border-right: 1px solid #d4d4d4; border-bottom: 1px solid #d4d4d4; white-space: pre; vertical-align: middle; }
.form { border-color: #000; }
.open { border-right-color: #d4d4d4; }
.center { text-align: center; }
.top { vertical-align: top; padding-top: 1px; }
.client { line-height: 9px; }
.low { vertical-align: bottom; padding-bottom: 10px; }
.title { text-align: center; font-size: 14px; line-height: 16px; }
.thin { font-weight: 400; font-size: 6px; }
.times { display: grid; grid-template-columns: 217px 23px 24px 21px 37px 31px; text-align: right; }
.active { position: relative; }
.active::before { content: ""; position: absolute; inset: -2px; border: 2px solid #217346; }
.active::after { content: ""; position: absolute; right: -4px; bottom: -4px; width: 6px; height: 6px; background: #217346; border: solid #fff; border-width: 1px 0 0 1px; }
.vscroll { display: flex; flex-direction: column; width: 14px; margin: 3px 4px 0 3px; background: #dadada; }
.vscroll button, .hscroll button { display: flex; align-items: center; justify-content: center; width: 14px; height: 14px; background: #fff; border: 1px solid #ababab; fill: #666; flex: none; }
.thumb { background: #fff; border: 1px solid #ababab; }
.vscroll .thumb { height: 344px; margin-bottom: auto; }

.sheetbar { display: flex; height: 28px; border-bottom: 1px solid #c8c6c4; flex: none; font-size: 13px; }
.nav { width: 28px; height: 26px; }
.nav:first-child { margin-left: 15px; }
.tab { height: 24px; background: none; }
.current { width: 154px; margin-left: 29px; background: #fff; color: #217346; border: 1px solid #aaa; border-top: 0; border-bottom: 2px solid #217346; }
.other { width: 152px; background: linear-gradient(#999, #999) right 4px / 1px 20px no-repeat; }
.add { width: 50px; height: 26px; margin-left: 16px; }
.hpart { display: flex; align-items: center; gap: 15px; width: 526px; margin: 0 21px 0 auto; height: 26px; }
.hscroll { display: flex; flex: 1; height: 14px; background: #dadada; }
.hscroll .thumb { width: 68px; height: 14px; margin-right: auto; }
.status { display: flex; align-items: center; height: 21px; background: #f3f2f1; flex: none; }
.ready { margin: 0 auto 0 7px; }
.view { width: 40px; height: 21px; }
.view.on { background: #d2d0ce; }
.step { width: 19px; height: 21px; }
.zoom { appearance: none; width: 100px; height: 13px; background: linear-gradient(#666, #666) 50% 50% / 1px 5px no-repeat, linear-gradient(#666, #666) 50% 50% / 100% 1px no-repeat; }
.zoom::-webkit-slider-thumb { appearance: none; width: 5px; height: 11px; background: #777; }
.percent { width: 48px; padding-left: 7px; }

.taskbar { display: flex; height: 40px; background: #37191b; color: #fff; flex: none; }
.app { position: relative; width: 48px; height: 40px; flex: none; }
.cortana { display: flex; align-items: center; gap: 10px; width: 344px; padding-left: 11px; background: #f2f2f2; border: 1px solid #b8b8b8; color: #333; font-size: 14px; }
.cortana input { flex: 1; background: none; }
.cortana input::placeholder { color: #333; opacity: 1; }
.apps { display: flex; gap: 1px; margin-left: 1px; }
.run::after { content: ""; position: absolute; left: 4px; right: 4px; bottom: 0; height: 2px; background: #76b9ed; }
.lit { background: #5b4345; }
.lit::after { left: 0; right: 0; }
.tray { display: flex; align-items: center; margin-left: auto; }
.weather { gap: 9px; font-size: 14px; margin-right: 10px; }
.t { width: 24px; height: 40px; }
.ime { font-size: 18px; }
.clock { flex-direction: column; width: 72px; font-size: 12px; line-height: 18px; }
.note { width: 50px; height: 40px; padding-top: 8px; }
</style>
